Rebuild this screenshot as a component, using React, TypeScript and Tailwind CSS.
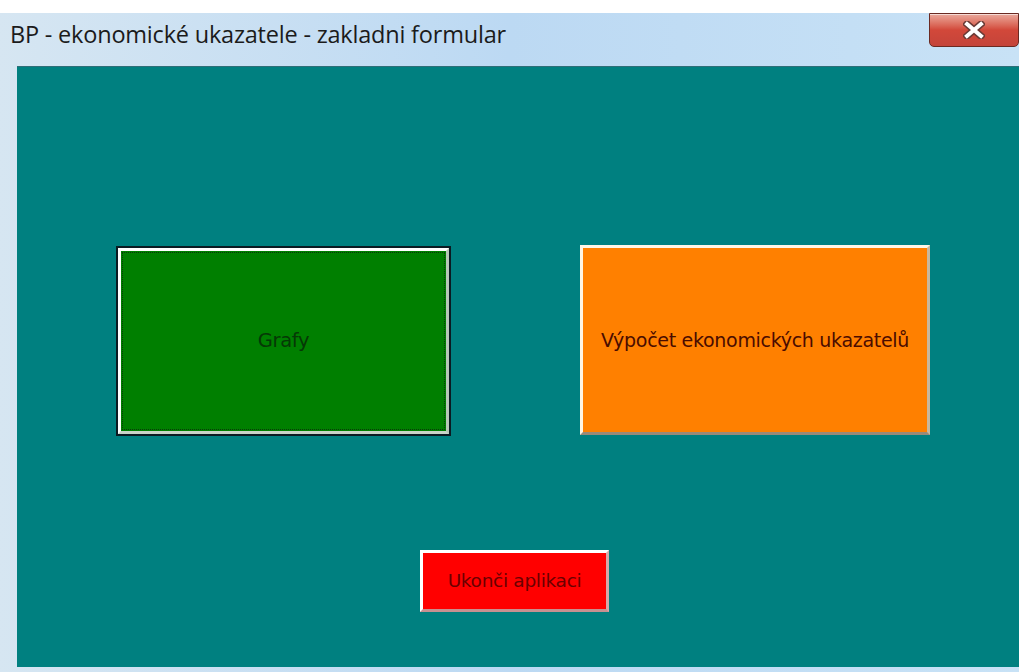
import React from "react";

const CloseButton = () => (
  <div className="w-[90px] h-[34px] rounded-b-[5px] border border-[#6b2a22] bg-gradient-to-b from-[#e9a89c] via-[#d2483a] to-[#c4443a] flex items-center justify-center shadow-[inset_0_1px_0_rgba(255,255,255,0.6)]">
    <svg width="22" height="18" viewBox="0 0 22 18">
      <path d="M4 3 L18 15 M18 3 L4 15" stroke="#6a3a35" strokeWidth="7" strokeLinecap="square" />
      <path d="M4 3 L18 15 M18 3 L4 15" stroke="#ffffff" strokeWidth="4" strokeLinecap="square" />
    </svg>
  </div>
);

const App = () => {
  return (
    <div className="w-[1019px] h-[672px] bg-white flex flex-col overflow-hidden font-['Tahoma','DejaVu_Sans',sans-serif]">
      {/* Window frame */}
      <div className="mt-[13px] flex-1 flex flex-col bg-gradient-to-r from-[#d6e6f2] via-[#bcd9f3] to-[#c8e2f6]">
        {/* Title bar */}
        <div className="h-[53px] flex items-start justify-between">
          <span className="pl-[10px] pt-[4px] text-[23.5px] text-[#1b1b1b] font-['Open_Sans','Noto_Sans',sans-serif] tracking-[-0.2px]">
            BP - ekonomické ukazatele - zakladni formular
          </span>
          <CloseButton />
        </div>

        {/* Client area */}
        <div className="ml-[17px] flex-1 mb-[5px] bg-[#008080] border-t border-[#2f6e78] flex flex-col pt-[178px]">
          <div className="flex items-start">
            <button className="ml-[99px] mt-[1px] w-[335px] h-[190px] border-2 border-[#0b1a22] bg-[#007f00] p-0">
              <div className="w-full h-full border-t-[3px] border-l-[3px] border-white border-r-[3px] border-b-[3px] border-r-[#b8c8b8] border-b-[#c8d4c8] p-[1px]">
                <div className="w-full h-full border border-dotted border-[#0a3a0a] flex items-center justify-center">
                  <span className="text-[19.5px] text-[#063806] tracking-[-0.3px]">Grafy</span>
                </div>
              </div>
            </button>
            <button className="ml-[129px] w-[350px] h-[190px] bg-[#ff8000] border-t-[3px] border-l-[3px] border-[#fff6e6] border-r-[3px] border-b-[3px] border-r-[#c8b8a0] border-b-[#9a8a78] flex items-center justify-center">
              <span className="text-[19px] text-[#4a0c00] tracking-[-0.3px]">Výpočet ekonomických ukazatelů</span>
            </button>
          </div>
          <button className="ml-[403px] mt-[114px] w-[189px] h-[62px] bg-[#ff0000] border-t-[3px] border-l-[3px] border-white border-r-[3px] border-b-[3px] border-r-[#d8a8a8] border-b-[#c89090] flex items-center justify-center">
            <span className="text-[18.5px] text-[#6a0000] tracking-[-0.3px]">Ukonči aplikaci</span>
          </button>
        </div>
      </div>
    </div>
  );
};

export default App;
